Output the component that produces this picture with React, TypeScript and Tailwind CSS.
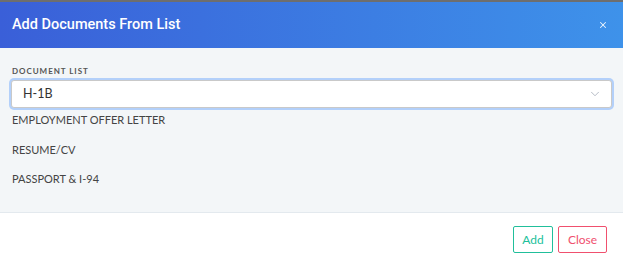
import { ChevronDown, X } from 'lucide-react'

const documents = ['EMPLOYMENT OFFER LETTER', 'RESUME/CV', 'PASSPORT & I-94']

export default function App() {
  return (
    <div className="flex h-[266px] w-[623px] flex-col overflow-hidden bg-white font-['Lato',sans-serif]">
      {/* top edge of backdrop */}
      <div className="h-[2px] bg-[#6e6e6e]" />

      {/* Header */}
      <div className="flex h-[46px] items-center justify-between bg-gradient-to-r from-[#3a5fd8] to-[#3e92ea] pl-3 pr-[15px]">
        <h2 className="font-['Roboto',sans-serif] text-[14.5px] font-medium text-white">Add Documents From List</h2>
        <X size={10} strokeWidth={2.5} className="text-white/90" />
      </div>

      {/* Body */}
      <div className="h-[165px] border-b border-[#e3e9ee] bg-[#f3f6f8] px-[11px] pt-[17px]">
        <label className="block pl-[1px] text-[8px] font-bold tracking-[0.12em] text-[#555]">DOCUMENT LIST</label>
        <div className="mt-[3px] flex h-[28px] items-center justify-between rounded-[3px] border border-[#c9c9c9] bg-white pl-[11px] pr-[9px] ring-2 ring-[#b3d0fa]">
          <span className="text-[12.5px] text-[#333]">H-1B</span>
          <ChevronDown size={14} strokeWidth={1.25} className="text-[#9aa3b0]" />
        </div>
        <ul className="mt-[1px] pl-[1px]">
          {documents.map((d) => (
            <li key={d} className="h-[29.5px] pt-[3px] text-[11px] text-[#444]">{d}</li>
          ))}
        </ul>
      </div>

      {/* Footer */}
      <div className="flex flex-1 items-start justify-end gap-[5px] pr-[16px] pt-[13px]">
        <button className="h-[27px] w-[40px] rounded-[2px] border border-[#21bf9b] text-[12px] text-[#21bf9b]">Add</button>
        <button className="h-[27px] w-[49px] rounded-[2px] border border-[#f0506e] text-[12px] text-[#f0506e]">Close</button>
      </div>
    </div>
  )
}
